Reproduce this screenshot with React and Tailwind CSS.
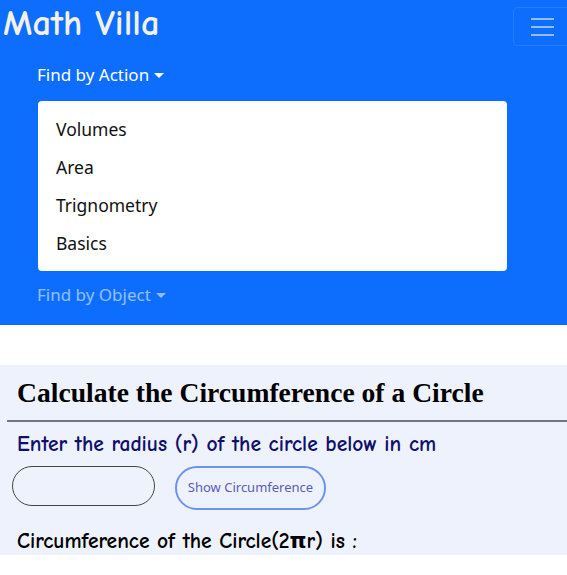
import React from 'react';

const comic = { fontFamily: '"Comic Sans MS", "Comic Neue", "DejaVu Sans", cursive' };

const Caret = ({ className }) => (
    <svg className={className} width="10" height="6" viewBox="0 0 10 6">
        <path d="M0 0 L10 0 L5 5 Z" fill="currentColor" />
    </svg>
);

const App = () => {
    const items = ['Volumes', 'Area', 'Trignometry', 'Basics'];

    return (
        <div className="min-h-[575px] bg-white overflow-hidden" style={{ fontFamily: '"Segoe UI", "Noto Sans", sans-serif' }}>
            <nav className="bg-[#0d6efd] h-[325px]">
                <div className="flex justify-between items-start">
                    <span className="text-[36.5px] leading-[46px] pl-[3px] font-bold text-[#f3f1e6]" style={comic}>
                        Math Villa
                    </span>
                    <button className="mt-[7px] mr-[-12px] w-[66px] h-[39px] border border-white/10 rounded-[5px] flex flex-col items-start justify-center gap-[6px] pl-[17px]">
                        <span className="block w-[23px] h-[2px] bg-white/55" />
                        <span className="block w-[23px] h-[2px] bg-white/55" />
                        <span className="block w-[23px] h-[2px] bg-white/55" />
                    </button>
                </div>
                <ul className="pl-[37px] pr-[60px] mt-[17px]">
                    <li>
                        <div className="flex items-center gap-[5px] text-white text-[17px] leading-[24px]">
                            Find by Action <Caret className="mt-[1px]" />
                        </div>
                        <div className="mt-[14px] ml-[1px] w-[469px] bg-white rounded-[4px] py-[9px] text-[17.5px] text-[#111]">
                            {items.map((item) => (
                                <div key={item} className="px-[18px] h-[38px] flex items-center">
                                    {item}
                                </div>
                            ))}
                        </div>
                    </li>
                    <li>
                        <div className="mt-[12px] flex items-center gap-[5px] text-white/55 text-[17px] leading-[24px]">
                            Find by Object <Caret className="mt-[1px]" />
                        </div>
                    </li>
                </ul>
            </nav>

            <section className="mt-[40px] bg-[#eef2fc] h-[190px] pl-[7px]">
                <h1 className="pl-[10px] pt-[10px] text-[27.6px] leading-[36px] font-bold text-black" style={{ fontFamily: '"Liberation Serif", "Times New Roman", serif' }}>
                    Calculate the Circumference of a Circle
                </h1>
                <hr className="mt-[9px] border-0 h-[2px] bg-[#74757c]" />
                <p className="pl-[10px] mt-[9px] text-[21.5px] leading-[26px] font-bold text-[#10106b]" style={comic}>
                    Enter the radius (r) of the circle below in cm
                </p>
                <div className="flex items-start gap-[20px] pl-[5px] mt-[9px]">
                    <input className="w-[143px] h-[40px] rounded-full border border-[#444] bg-transparent outline-none" />
                    <button className="w-[151px] h-[44px] rounded-full border-2 border-[#6d93ee] text-[13px] text-[#5a5cb8]">
                        Show Circumference
                    </button>
                </div>
                <p className="pl-[10px] mt-[18px] text-[21.5px] leading-[26px] font-bold text-black" style={comic}>
                    Circumference of the Circle(2πr) is :
                </p>
            </section>
        </div>
    );
};

export default App;
